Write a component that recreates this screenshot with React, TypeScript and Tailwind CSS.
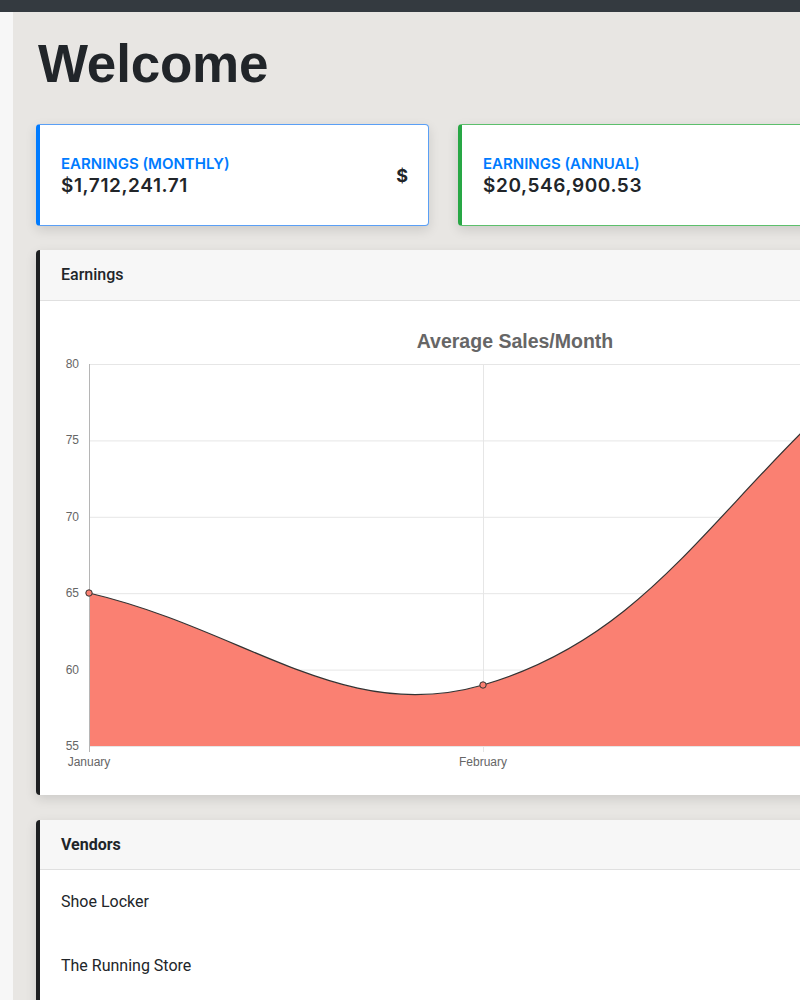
import { } from 'react'

const yTicks = [80, 75, 70, 65, 60, 55]
const yOf = (v: number) => 364 + ((80 - v) / 25) * 382

function SalesChart() {
  const line =
    'M89,593 C246.6,629.8 343.5,725.5 483,685 C658.7,633.9 719.4,492.4 877,364'
  const area = line + ' L877,746 L89,746 Z'

  return (
    <svg width="760" height="494" viewBox="40 301 760 494" className="block">
      <text
        x="515"
        y="348"
        textAnchor="middle"
        fontFamily="'Liberation Sans', Arial, sans-serif"
        fontWeight="bold"
        fontSize="19.5"
        fill="#666"
      >
        Average Sales/Month
      </text>

      {/* grid */}
      {yTicks.map((v) => (
        <g key={v}>
          <line x1="89" x2="980" y1={yOf(v) + 0.5} y2={yOf(v) + 0.5} stroke="#e6e6e6" strokeWidth="1" />
          <text
            x="79"
            y={yOf(v) + 4}
            textAnchor="end"
            fontFamily="'Liberation Sans', Arial, sans-serif"
            fontSize="12"
            fill="#666"
          >
            {v}
          </text>
        </g>
      ))}
      <line x1="483.5" x2="483.5" y1="364" y2="752" stroke="#e6e6e6" />

      <path d={area} fill="#fa8072" />
      <path d={line} fill="none" stroke="#333" strokeWidth="1.2" />

      <line x1="89.5" x2="89.5" y1="364" y2="752" stroke="#b5b5b5" />

      {[
        [89, 593],
        [483, 685],
      ].map(([x, y]) => (
        <circle key={x} cx={x} cy={y} r="3.2" fill="#fa8072" stroke="#333" strokeWidth="1" />
      ))}

      {[
        ['January', 89],
        ['February', 483],
      ].map(([label, x]) => (
        <text
          key={label}
          x={x}
          y="766"
          textAnchor="middle"
          fontFamily="'Liberation Sans', Arial, sans-serif"
          fontSize="12"
          fill="#666"
        >
          {label}
        </text>
      ))}
    </svg>
  )
}

function StatCard({ label, value, accent, border, icon }: { label: string; value: string; accent: string; border: string; icon?: string }) {
  return (
    <div className={`w-[393px] h-[102px] rounded-[4px] bg-white border border-l-4 shadow-[0_4px_12px_rgba(0,0,0,0.12)] flex items-center justify-between pl-[21px] pr-[20px] ${border} ${accent}`}>
      <div className="pt-[2px]">
        <div className="text-[15px] leading-[18px] font-semibold text-[#007bff] uppercase">{label}</div>
        <div className="text-[19px] leading-[25px] font-semibold text-[#212529] tracking-[0.6px]">{value}</div>
      </div>
      {icon && <div className="text-[18px] font-bold text-[#212529]">{icon}</div>}
    </div>
  )
}

export default function App() {
  return (
    <div className="w-[800px] h-[1000px] overflow-hidden bg-[#e8e6e3] font-['Inter','Noto_Sans',sans-serif] text-[#212529]">
      <div className="h-[12px] bg-[#343a40]" />
      <div className="flex">
        <div className="w-[13px] shrink-0 h-[988px] bg-[#f7f7f7]" />
        <main className="pl-[23px] shrink-0 w-[990px]">
          <h1 className="font-['Liberation_Sans',Arial,sans-serif] font-bold text-[53px] leading-[60px] pt-[22px] pl-[2px] text-[#212529] tracking-[-0.2px]">
            Welcome
          </h1>

          <div className="flex gap-[29px] mt-[30px]">
            <StatCard label="Earnings (Monthly)" value="$1,712,241.71" accent="border-l-[#007bff]" border="border-[#5a9ff5]" icon="$" />
            <StatCard label="Earnings (Annual)" value="$20,546,900.53" accent="border-l-[#28a745]" border="border-[#5cbf6c]" />
          </div>

          {/* Earnings chart */}
          <section className="mt-[24px] bg-white rounded-[4px] border-l-4 border-[#1d1f21] shadow-[0_4px_12px_rgba(0,0,0,0.12)] overflow-hidden">
            <div className="h-[51px] bg-[#f7f7f7] border-b border-[#e0e0e0] flex items-center px-[21px] font-['Roboto',sans-serif] text-[16px] font-medium">
              Earnings
            </div>
            <SalesChart />
          </section>

          {/* Vendors */}
          <section className="mt-[25px] bg-white rounded-[4px] border-l-4 border-[#1d1f21] shadow-[0_4px_12px_rgba(0,0,0,0.12)] overflow-hidden">
            <div className="h-[50px] bg-[#f7f7f7] border-b border-[#e0e0e0] flex items-center px-[21px] font-['Roboto',sans-serif] text-[16px] font-bold">
              Vendors
            </div>
            <ul className="text-[16px] font-['Roboto',sans-serif] pt-[1px] pb-[40px]">
              <li className="h-[62px] flex items-center px-[21px]">Shoe Locker</li>
              <li className="h-[63px] flex items-center px-[21px] pt-[2px]">The Running Store</li>
            </ul>
          </section>
        </main>
      </div>
    </div>
  )
}
